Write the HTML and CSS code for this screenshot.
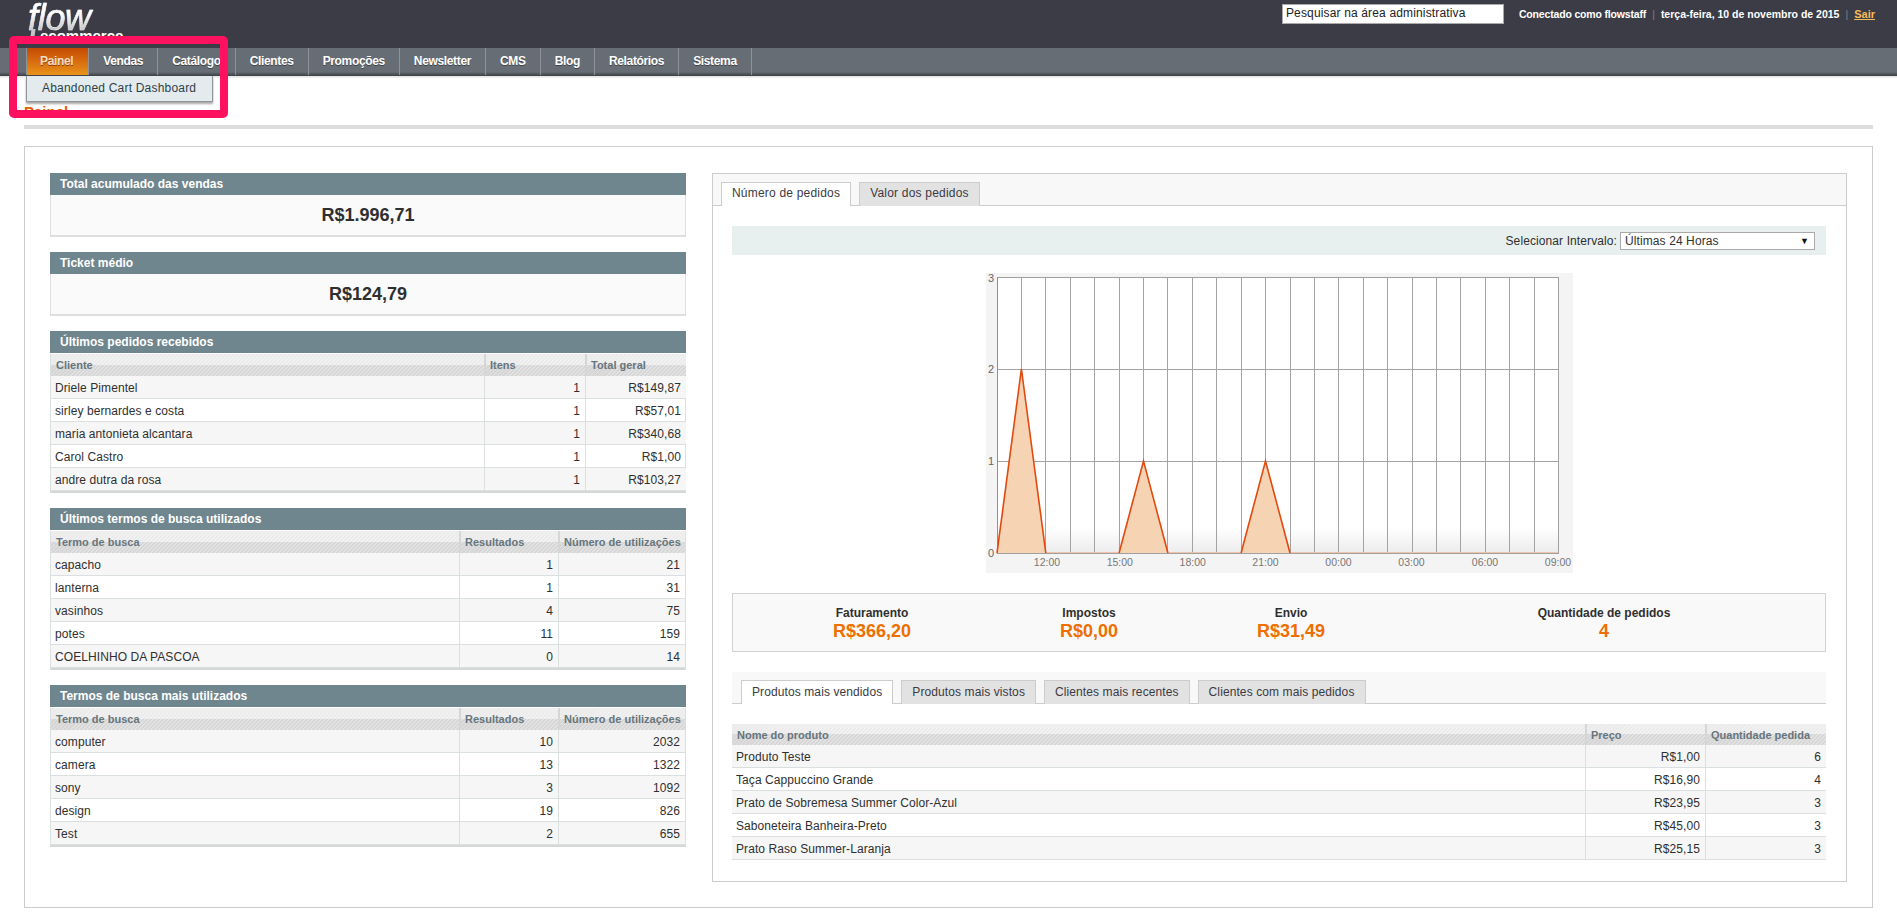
FILE: index.html
```html
<!DOCTYPE html>
<html lang="pt-BR">
<head>
<meta charset="utf-8">
<title>Painel</title>
<link rel="stylesheet" href="styles.css">
</head>
<body>
<header class="topbar">
  <div class="logo"><span class="logo-flow">flow</span><span class="logo-sub">ecommerce</span></div>
  <div class="topbar-right">
    <div class="search">Pesquisar na área administrativa</div>
    <div class="userinfo"><span class="username">Conectado como flowstaff</span><i>|</i><span>terça-feira, 10 de novembro de 2015</span><i>|</i><a href="#">Sair</a></div>
  </div>
</header>
<nav class="nav">
  <ul class="menu">
    <li class="menu-item active"><a href="#">Painel</a>
      <div class="dropdown">Abandoned Cart Dashboard</div>
    </li>
    <li class="menu-item"><a href="#">Vendas</a></li>
    <li class="menu-item"><a href="#">Catálogo</a></li>
    <li class="menu-item"><a href="#">Clientes</a></li>
    <li class="menu-item"><a href="#">Promoções</a></li>
    <li class="menu-item"><a href="#">Newsletter</a></li>
    <li class="menu-item"><a href="#">CMS</a></li>
    <li class="menu-item"><a href="#">Blog</a></li>
    <li class="menu-item"><a href="#">Relatórios</a></li>
    <li class="menu-item"><a href="#">Sistema</a></li>
  </ul>
</nav>
<main class="page">
  <h3 class="page-title">Painel</h3>
  <div class="board">
    <section class="left">
      <div class="block">
        <h4 class="block-head">Total acumulado das vendas</h4>
        <div class="block-value">R$1.996,71</div>
      </div>
      <div class="block">
        <h4 class="block-head">Ticket médio</h4>
        <div class="block-value">R$124,79</div>
      </div>
      <div class="block">
        <h4 class="block-head">Últimos pedidos recebidos</h4>
        <div class="grid-wrap">
          <table class="grid">
            <colgroup><col class="c-433"><col class="c-101"><col class="c-101"></colgroup>
            <thead><tr><th>Cliente</th><th>Itens</th><th>Total geral</th></tr></thead>
            <tbody>
              <tr><td>Driele Pimentel</td><td class="num">1</td><td class="num">R$149,87</td></tr>
              <tr><td>sirley bernardes e costa</td><td class="num">1</td><td class="num">R$57,01</td></tr>
              <tr><td>maria antonieta alcantara</td><td class="num">1</td><td class="num">R$340,68</td></tr>
              <tr><td>Carol Castro</td><td class="num">1</td><td class="num">R$1,00</td></tr>
              <tr><td>andre dutra da rosa</td><td class="num">1</td><td class="num">R$103,27</td></tr>
            </tbody>
          </table>
        </div>
      </div>
      <div class="block">
        <h4 class="block-head">Últimos termos de busca utilizados</h4>
        <div class="grid-wrap">
          <table class="grid">
            <colgroup><col class="c-408"><col class="c-99"><col class="c-127"></colgroup>
            <thead><tr><th>Termo de busca</th><th>Resultados</th><th>Número de utilizações</th></tr></thead>
            <tbody>
              <tr><td>capacho</td><td class="num">1</td><td class="num">21</td></tr>
              <tr><td>lanterna</td><td class="num">1</td><td class="num">31</td></tr>
              <tr><td>vasinhos</td><td class="num">4</td><td class="num">75</td></tr>
              <tr><td>potes</td><td class="num">11</td><td class="num">159</td></tr>
              <tr><td>COELHINHO DA PASCOA</td><td class="num">0</td><td class="num">14</td></tr>
            </tbody>
          </table>
        </div>
      </div>
      <div class="block">
        <h4 class="block-head">Termos de busca mais utilizados</h4>
        <div class="grid-wrap">
          <table class="grid">
            <colgroup><col class="c-408"><col class="c-99"><col class="c-127"></colgroup>
            <thead><tr><th>Termo de busca</th><th>Resultados</th><th>Número de utilizações</th></tr></thead>
            <tbody>
              <tr><td>computer</td><td class="num">10</td><td class="num">2032</td></tr>
              <tr><td>camera</td><td class="num">13</td><td class="num">1322</td></tr>
              <tr><td>sony</td><td class="num">3</td><td class="num">1092</td></tr>
              <tr><td>design</td><td class="num">19</td><td class="num">826</td></tr>
              <tr><td>Test</td><td class="num">2</td><td class="num">655</td></tr>
            </tbody>
          </table>
        </div>
      </div>
    </section>
    <section class="right">
      <div class="tabs tabs-top">
        <span class="tab active">Número de pedidos</span>
        <span class="tab">Valor dos pedidos</span>
      </div>
      <div class="right-body">
        <div class="range">
          <span class="range-label">Selecionar Intervalo:</span>
          <div class="range-select"><span>Últimas 24 Horas</span><span class="range-arrow">▼</span></div>
        </div>
        <svg class="chart" width="587" height="300" viewBox="0 0 587 300">
          <defs>
            <linearGradient id="fade" x1="0" y1="0" x2="0" y2="1">
              <stop offset="0" stop-color="#ffffff"/>
              <stop offset="1" stop-color="#ececec"/>
            </linearGradient>
          </defs>
          <rect width="587" height="300" fill="#f4f4f4"/>
          <rect x="11" y="4" width="561.5" height="276" fill="#ffffff"/>
          <rect x="11" y="254" width="561.5" height="26" fill="url(#fade)"/>
          <path d="M35.5 4V280M59.5 4V280M84.5 4V280M108.5 4V280M133.5 4V280M157.5 4V280M181.5 4V280M206.5 4V280M230.5 4V280M255.5 4V280M279.5 4V280M304.5 4V280M328.5 4V280M352.5 4V280M377.5 4V280M401.5 4V280M426.5 4V280M450.5 4V280M474.5 4V280M499.5 4V280M523.5 4V280M548.5 4V280" stroke="#a3a3a3" stroke-width="1" fill="none" shape-rendering="crispEdges"/>
          <path d="M11 96.5H572M11 188.5H572" stroke="#a3a3a3" stroke-width="1" fill="none" shape-rendering="crispEdges"/>
          <path d="M11.5 4.5H572.5V280.5H11.5Z" stroke="#a0a0a0" stroke-width="1" fill="none" shape-rendering="crispEdges"/>
          <path d="M11.5 4V281" stroke="#8f8f8f" stroke-width="1" fill="none" shape-rendering="crispEdges"/>
          <path d="M11 280L35.4 96L59.8 280ZM133.1 280L157.5 188L181.9 280ZM255.1 280L279.5 188L304 280Z" fill="#f5d3b3"/>
          <path d="M59.8 279.5H133.1M181.9 279.5H255.1M304 279.5H572" stroke="#eec4ad" stroke-width="1.2" fill="none"/>
          <path d="M11 280L35.4 96L59.8 280M133.1 280L157.5 188L181.9 280M255.1 280L279.5 188L304 280" stroke="#e2490f" stroke-width="1.6" fill="none"/>
          <g class="chart-y">
            <text x="5" y="8.5">3</text>
            <text x="5" y="100">2</text>
            <text x="5" y="192">1</text>
            <text x="5" y="284">0</text>
          </g>
          <g class="chart-x">
            <text x="61" y="293">12:00</text>
            <text x="133.8" y="293">15:00</text>
            <text x="206.7" y="293">18:00</text>
            <text x="279.5" y="293">21:00</text>
            <text x="352.5" y="293">00:00</text>
            <text x="425.5" y="293">03:00</text>
            <text x="499" y="293">06:00</text>
            <text x="572" y="293">09:00</text>
          </g>
        </svg>
        <div class="totals">
          <div class="total"><span class="total-label">Faturamento</span><strong class="total-value">R$366,20</strong></div>
          <div class="total"><span class="total-label">Impostos</span><strong class="total-value">R$0,00</strong></div>
          <div class="total"><span class="total-label">Envio</span><strong class="total-value">R$31,49</strong></div>
          <div class="total"><span class="total-label">Quantidade de pedidos</span><strong class="total-value">4</strong></div>
        </div>
        <div class="tabs tabs-band">
          <span class="tab active">Produtos mais vendidos</span>
          <span class="tab">Produtos mais vistos</span>
          <span class="tab">Clientes mais recentes</span>
          <span class="tab">Clientes com mais pedidos</span>
        </div>
        <table class="grid grid-products">
          <colgroup><col class="c-853"><col class="c-120"><col class="c-121"></colgroup>
          <thead><tr><th>Nome do produto</th><th>Preço</th><th>Quantidade pedida</th></tr></thead>
          <tbody>
            <tr><td>Produto Teste</td><td class="num">R$1,00</td><td class="num">6</td></tr>
            <tr><td>Taça Cappuccino Grande</td><td class="num">R$16,90</td><td class="num">4</td></tr>
            <tr><td>Prato de Sobremesa Summer Color-Azul</td><td class="num">R$23,95</td><td class="num">3</td></tr>
            <tr><td>Saboneteira Banheira-Preto</td><td class="num">R$45,00</td><td class="num">3</td></tr>
            <tr><td>Prato Raso Summer-Laranja</td><td class="num">R$25,15</td><td class="num">3</td></tr>
          </tbody>
        </table>
      </div>
    </section>
  </div>
</main>
<div class="annotation"></div>
</body>
</html>
```
FILE: styles.css
```css
* { box-sizing: border-box; }
html, body { margin: 0; padding: 0; }
body {
  position: relative;
  width: 1897px;
  height: 920px;
  overflow: hidden;
  background: #fff;
  color: #2f2f2f;
  font: 12px/16px "Liberation Sans", Arial, sans-serif;
}
h3, h4 { margin: 0; }

.topbar {
  height: 48px;
  background: #3b3c46;
  display: flex;
  justify-content: space-between;
}
.logo {
  position: relative;
  display: flex;
  flex-direction: column;
  margin-left: 28px;
  width: 100px;
  color: #fff;
}
.logo::before {
  content: "";
  position: absolute;
  left: 3px;
  top: 29px;
  width: 4px;
  height: 8px;
  background: #c4c4c8;
  transform: skewX(-8deg);
}
.logo-flow {
  margin-top: 1px;
  padding-right: 6px;
  font-size: 36px;
  line-height: 34px;
  font-style: italic;
  letter-spacing: -.3px;
  background: linear-gradient(#ffffff 35%, #b4b4b8 100%);
  -webkit-background-clip: text;
  background-clip: text;
  color: transparent;
  -webkit-text-stroke: .6px rgba(255, 255, 255, .6);
}
.logo-sub {
  margin-left: 12px;
  margin-top: -8px;
  font-size: 15px;
  line-height: 18px;
  font-weight: 700;
}
.topbar-right {
  display: flex;
  align-items: flex-start;
  padding-top: 4px;
  padding-right: 22px;
}
.search {
  width: 222px;
  height: 20px;
  padding-left: 3px;
  background: #fff;
  border: 1px solid #aaa;
  color: #222;
  font-size: 12px;
  line-height: 17px;
  letter-spacing: .15px;
}
.userinfo {
  margin-left: 15px;
  color: #fff;
  font-size: 10.5px;
  font-weight: 700;
  line-height: 21px;
}
.username { letter-spacing: -.17px; }
.userinfo i {
  margin: 0 6px;
  color: #7d7e86;
  font-style: normal;
  font-weight: 400;
}
.userinfo a { color: #f6bb5a; font-size: 11px; font-weight: 700; }

.nav {
  height: 30px;
  background: linear-gradient(#676d74 0, #676d74 80%, #3b3f44 93%, #e6e6e6 93%, #f2f2f2 100%);
}
.menu {
  display: flex;
  list-style: none;
  margin: 0;
  padding: 0 0 0 26px;
  height: 28px;
}
.menu-item {
  position: relative;
  border-right: 1px solid #8e9399;
  padding: 0 14px;
  height: 27px;
  font-weight: 700;
  line-height: 26px;
  letter-spacing: -.35px;
  text-shadow: 0 1px 0 #3e4348;
}
.menu-item a { color: #fff; text-decoration: none; }
.menu-item.active {
  border-left: 1px solid #8e9399;
  padding: 0 15px 0 13px;
  background: linear-gradient(#c54a04, #e9921b);
  background-clip: padding-box;
}
.menu-item.active a { color: #f7dcc0; text-shadow: 0 1px 0 #8a3c05; }
.dropdown {
  position: absolute;
  left: -1px;
  top: 28px;
  width: 187px;
  height: 26px;
  padding-left: 15px;
  background: #e3ebee;
  border: 1px solid #8f9497;
  border-top: 0;
  box-shadow: 0 2px 2px rgba(0, 0, 0, .35);
  color: #2f3e4a;
  font-weight: 400;
  line-height: 24px;
  text-shadow: none;
  letter-spacing: .2px;
  white-space: nowrap;
}

.page { padding: 25px 24px 0; }
.page-title {
  height: 26px;
  color: #eb5e00;
  font-size: 15px;
  line-height: 18px;
  font-weight: 700;
  border-bottom: 4px solid #ddd;
}
.board {
  display: grid;
  grid-template-columns: 636px 1135px;
  gap: 26px;
  height: 762px;
  margin-top: 17px;
  padding: 26px 25px 0;
  border: 1px solid #ccc;
}

.left { display: flex; flex-direction: column; gap: 15px; }
.block-head {
  height: 22px;
  padding-left: 10px;
  background: #70868f;
  color: #fff;
  font-size: 12px;
  line-height: 22px;
  font-weight: 700;
}
.block-value {
  height: 42px;
  background: #fafafa;
  border: 1px solid #dedede;
  border-top: 0;
  border-bottom-width: 2px;
  color: #2f2f2f;
  font-size: 18px;
  font-weight: 700;
  line-height: 40px;
  text-align: center;
}
.grid-wrap {
  margin-top: 1px;
  border: 1px solid #dadfe0;
  border-width: 0 1px 2px;
  border-bottom-color: #d6d8d8;
}
.grid {
  width: 100%;
  table-layout: fixed;
  border-collapse: separate;
  border-spacing: 0;
}
.c-433 { width: 433px; }
.c-101 { width: 101px; }
.c-408 { width: 408px; }
.c-99 { width: 99px; }
.c-127 { width: 127px; }
.c-853 { width: 853px; }
.c-120 { width: 120px; }
.c-121 { width: 121px; }
.grid th {
  height: 22px;
  padding: 0 4px 0 5px;
  background:
    repeating-linear-gradient(135deg, rgba(255, 255, 255, .3) 0 1.4px, transparent 1.4px 2.83px),
    linear-gradient(#ebebeb 50%, #d6d6d6 50%);
  color: #67757c;
  font-size: 11px;
  font-weight: 700;
  line-height: 14px;
  text-align: left;
  white-space: nowrap;
  overflow: hidden;
}
.grid th + th {
  padding-left: 4px;
  border-left: 2px solid;
  border-image: linear-gradient(90deg, #d3d7d7 50%, #fff 50%) 1;
}
.grid td {
  height: 23px;
  padding: 2px 5px 0 4px;
  border-bottom: 1px solid #dadfe0;
  line-height: 16px;
  letter-spacing: .08px;
}
.grid td + td { border-left: 1px solid #dadfe0; }
.grid tbody tr:nth-child(odd) td { background: #f6f6f6; }
.grid td.num { text-align: right; }

.right {
  height: 709px;
  border: 1px solid #ccc;
}
.tabs {
  display: flex;
  gap: 8px;
  height: 32px;
  padding: 8px 0 0 8px;
  background: #f8f8f8;
  border-bottom: 1px solid #ccc;
}
.tab {
  height: 24px;
  padding: 0 10px;
  background: #e2e2e2;
  border: 1px solid #ccc;
  border-bottom: 0;
  line-height: 21px;
  color: #3a3a44;
  white-space: nowrap;
  letter-spacing: .1px;
}
.tabs-top .tab { letter-spacing: .2px; }
.tab.active { background: #fff; }
.right-body { padding: 20px 20px 0 19px; }
.range {
  display: flex;
  justify-content: flex-end;
  align-items: center;
  gap: 3px;
  height: 29px;
  padding-right: 11px;
  background: #e7efef;
}
.range-label { letter-spacing: .1px; }
.range-select {
  display: flex;
  justify-content: space-between;
  align-items: center;
  width: 195px;
  height: 18px;
  padding: 0 5px 0 4px;
  background: #fff;
  border: 1px solid #aaa;
  letter-spacing: .1px;
}
.range-arrow { font-size: 9px; color: #111; }
.chart { display: block; margin: 18px auto 0; }
.chart-y text { fill: #666; font-size: 11px; text-anchor: middle; }
.chart-x text { fill: #777; font-size: 10.5px; text-anchor: middle; }

.totals {
  display: grid;
  grid-template-columns: 278px 156px 248px 378px;
  height: 59px;
  margin-top: 20px;
  padding-top: 12px;
  background: #f9f9f9;
  border: 1px solid #d2d2d2;
}
.total { display: flex; flex-direction: column; align-items: center; }
.total-label { font-weight: 700; line-height: 15px; color: #2f2f2f; }
.total-value { color: #ee6f00; font-size: 18px; line-height: 20px; font-weight: 700; }
.tabs-band { height: 32px; margin-top: 20px; padding-left: 9px; }
.tabs-band .tab { line-height: 23px; }
.grid-products { margin-top: 20px; }
.grid-products th { height: 21px; }

.annotation {
  position: absolute;
  left: 9px;
  top: 36px;
  width: 219px;
  height: 82px;
  border: 8px solid #ff1160;
  border-radius: 5px;
}
```
